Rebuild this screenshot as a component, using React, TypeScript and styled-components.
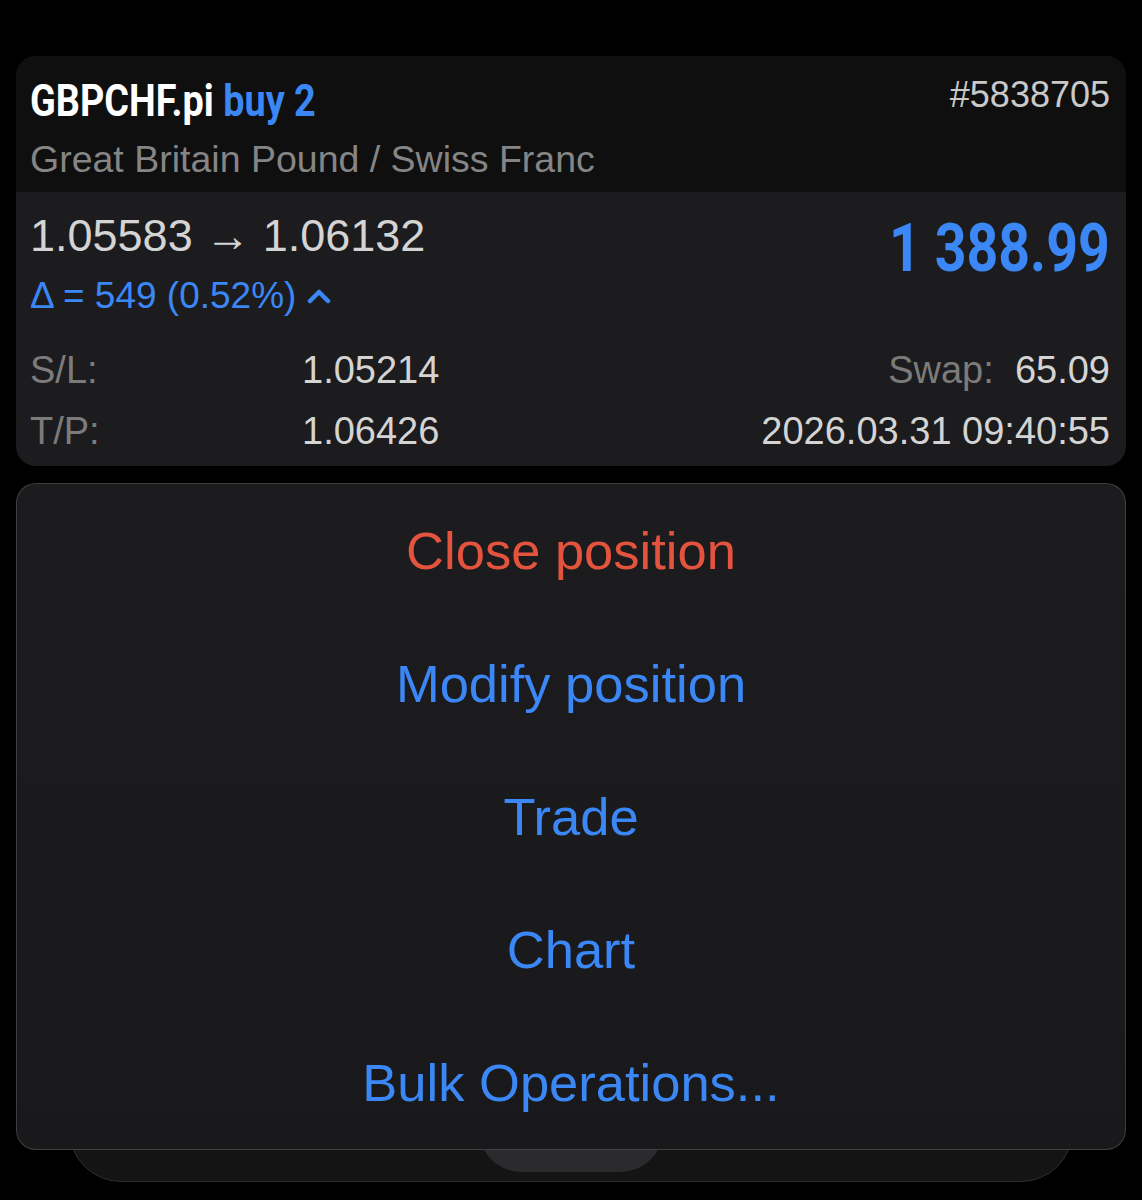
import styled, { createGlobalStyle } from "styled-components";

const GlobalStyle = createGlobalStyle`
	html, body {
		margin: 0;
		padding: 0;
		background: #000;
	}
	body {
		font-family: "Liberation Sans", Arial, sans-serif;
		-webkit-font-smoothing: antialiased;
	}
`;

const BLUE = "#3b87f5";
const RED = "#e4533e";

const Page = styled.div`
	display: flex;
	flex-direction: column;
	padding: 56px 16px 0;
	height: 1200px;
	box-sizing: border-box;
	overflow: hidden;
`;

const Card = styled.div`
	border-radius: 20px;
	overflow: hidden;
	background: #1c1c1e;
`;

const Header = styled.div`
	background: #0f0f0f;
	padding: 17px 16px 11px 14px;
	height: 136px;
	box-sizing: border-box;
`;

const TitleRow = styled.div`
	display: flex;
	justify-content: space-between;
	align-items: flex-start;
`;

// condensed bold face, squeezed from Roboto Bold
const Condensed = styled.span<{ $size: number; $color: string; $origin?: string }>`
	display: inline-block;
	font-family: Roboto, "Liberation Sans", sans-serif;
	font-weight: 700;
	font-size: ${(p) => p.$size}px;
	color: ${(p) => p.$color};
	transform: scaleX(0.84);
	transform-origin: ${(p) => p.$origin || "left"} center;
	white-space: nowrap;
`;

const Title = styled.div`
	line-height: 56px;
	height: 56px;
`;

const OrderId = styled.div`
	font-size: 36px;
	line-height: 40px;
	margin-top: 2px;
	color: #c9c9c9;
`;

const Subtitle = styled.div`
	font-size: 37.5px;
	line-height: 44px;
	margin-top: 8px;
	color: #858585;
`;

const Body = styled.div`
	padding: 18px 16px 0 14px;
	height: 274px;
	box-sizing: border-box;
`;

const PriceRow = styled.div`
	display: flex;
	justify-content: space-between;
	align-items: flex-start;
`;

const PriceCol = styled.div`
	display: flex;
	flex-direction: column;
`;

const Prices = styled.div`
	font-size: 45px;
	line-height: 52px;
	color: #d4d4d4;
`;

const Delta = styled.div`
	display: flex;
	align-items: center;
	gap: 11px;
	font-size: 37px;
	line-height: 46px;
	margin-top: 11px;
	color: ${BLUE};
`;

const Profit = styled.div`
	line-height: 72px;
	margin-top: 3px;
`;

const InfoGrid = styled.div`
	display: grid;
	grid-template-columns: 272px 1fr 1fr;
	row-gap: 15px;
	margin-top: 28px;
	font-size: 38px;
	line-height: 46px;
`;

const Label = styled.span`
	color: #7b7b7b;
`;

const Value = styled.span`
	color: #d4d4d4;
`;

const RightCell = styled.div`
	text-align: right;
	white-space: nowrap;
`;

const Menu = styled.div`
	position: relative;
	z-index: 2;
	margin-top: 17px;
	border-radius: 20px;
	border: 1px solid rgba(255, 255, 255, 0.16);
	background: linear-gradient(#1c1c1e, #19191b);
	display: flex;
	flex-direction: column;
`;

const MenuItem = styled.div<{ $danger?: boolean }>`
	height: 133px;
	display: flex;
	align-items: center;
	justify-content: center;
	font-size: 52.5px;
	color: ${(p) => (p.$danger ? RED : BLUE)};
`;

const TabBar = styled.div`
	position: relative;
	z-index: 1;
	margin: -72px 53px 0;
	height: 104px;
	border-radius: 52px;
	background: #141415;
	border: 1px solid #2e2e30;
	box-sizing: border-box;
	display: grid;
	grid-template-columns: repeat(5, 1fr);
	padding: 0 6px;
`;

const Tab = styled.div<{ $active?: boolean }>`
	display: flex;
	flex-direction: column;
	justify-content: flex-end;
	align-items: center;
	padding-bottom: 25px;
	margin: 0 ${(p) => (p.$active ? "6px" : "0")} 9px;
	border-radius: 44px;
	background: ${(p) => (p.$active ? "#2b2b2d" : "transparent")};
	font-size: 20px;
	line-height: 24px;
	color: #e6e6e6;
`;

const tabs = ["Quotes", "Chart", "Trade", "History", "Settings"];

export default function App() {
	return (
		<>
			<GlobalStyle />
			<Page>
				<Card>
					<Header>
						<TitleRow>
							<Title>
								<Condensed $size={45} $color="#ffffff">
									GBPCHF.pi <span style={{ color: BLUE }}>buy 2</span>
								</Condensed>
							</Title>
							<OrderId>#5838705</OrderId>
						</TitleRow>
						<Subtitle>Great Britain Pound / Swiss Franc</Subtitle>
					</Header>
					<Body>
						<PriceRow>
							<PriceCol>
								<Prices>1.05583 → 1.06132</Prices>
								<Delta>
									Δ = 549 (0.52%)
									<svg width="24" height="16" viewBox="0 0 24 16">
										<polyline
											points="3,13 12,4 21,13"
											fill="none"
											stroke={BLUE}
											strokeWidth="4.5"
											strokeLinecap="round"
											strokeLinejoin="round"
										/>
									</svg>
								</Delta>
							</PriceCol>
							<Profit>
								<Condensed $size={66} $color={BLUE} $origin="right">
									1 388.99
								</Condensed>
							</Profit>
						</PriceRow>
						<InfoGrid>
							<Label>S/L:</Label>
							<Value>1.05214</Value>
							<RightCell>
								<Label>Swap:</Label>&nbsp; <Value>65.09</Value>
							</RightCell>
							<Label>T/P:</Label>
							<Value>1.06426</Value>
							<RightCell>
								<Value>2026.03.31 09:40:55</Value>
							</RightCell>
						</InfoGrid>
					</Body>
				</Card>
				<Menu>
					<MenuItem $danger>Close position</MenuItem>
					<MenuItem>Modify position</MenuItem>
					<MenuItem>Trade</MenuItem>
					<MenuItem>Chart</MenuItem>
					<MenuItem>Bulk Operations...</MenuItem>
				</Menu>
				<TabBar>
					{tabs.map((t) => (
						<Tab key={t} $active={t === "Trade"}>
							{t}
						</Tab>
					))}
				</TabBar>
			</Page>
		</>
	);
}
